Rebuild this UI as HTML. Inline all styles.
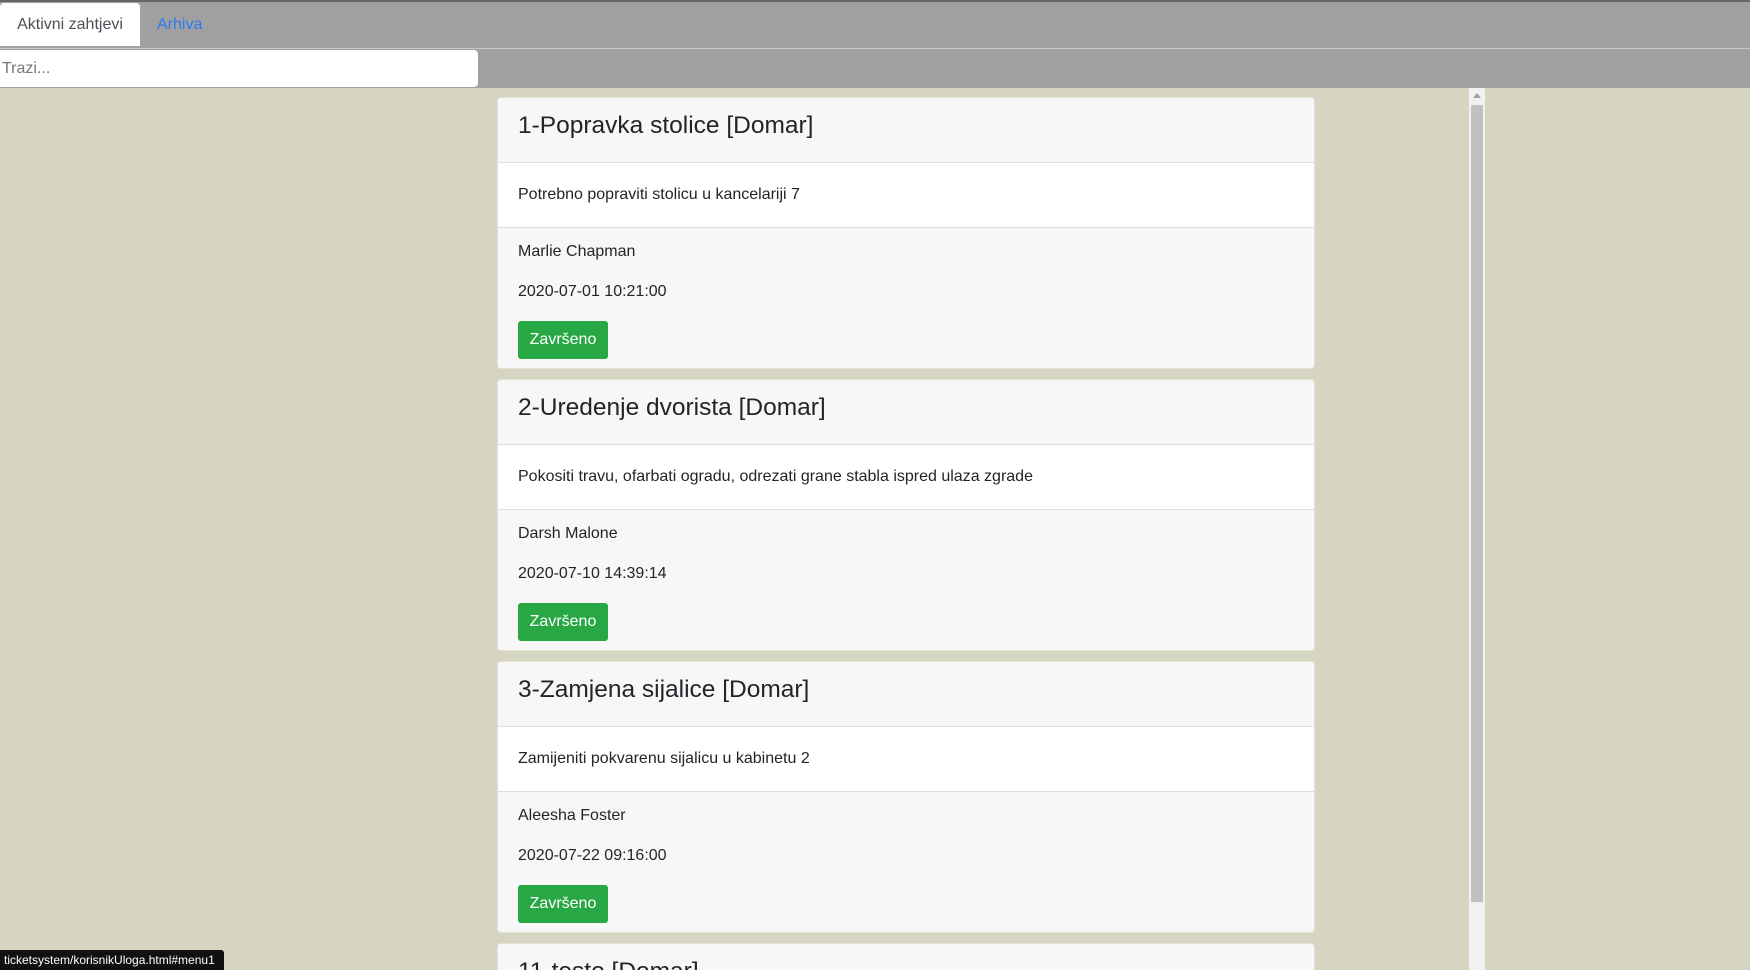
<!DOCTYPE html>
<html style="width:1750px;height:970px;overflow:hidden"><head><meta charset="utf-8"><style>
*{box-sizing:border-box;margin:0;padding:0}
body{width:1750px;height:970px;overflow:hidden;background:#d6d5c1;font-family:"Liberation Sans",sans-serif;position:relative}
.nav{position:absolute;left:0;top:0;width:1750px;height:49px;background:#a0a0a0;border-top:2px solid #666;border-bottom:1px solid #c8c8c8}
.tab{position:absolute;left:0;top:1px;width:140px;height:43px;background:#fff;border-radius:4px 4px 0 0;color:#495057;font-size:16px;line-height:43px;text-align:center}
.arh{position:absolute;left:157px;top:1px;line-height:43px;font-size:16px;color:#2a7bf0}
.sbar{position:absolute;left:0;top:49px;width:1750px;height:39px;background:#a0a0a0}
.inp{position:absolute;left:0;top:1px;width:478px;height:37px;background:#fff;border-radius:0 4px 4px 0;color:#777;font-size:16px;line-height:37px;padding-left:2px}
.card{position:absolute;left:497px;width:818px;height:272px;background:#f7f7f7;border:1px solid #e2e2dc;border-radius:4px;overflow:hidden}
.hd{height:65px;border-bottom:1px solid #ddd;font-size:24.5px;color:#212529;padding:14px 0 0 20px}
.bd{height:65px;background:#fff;border-bottom:1px solid #ddd;font-size:16px;color:#212529;padding:23px 0 0 20px}
.ft{padding:15px 0 0 20px;font-size:16px;color:#212529}
.ft p{height:40px}
.btn{display:inline-block;margin-top:-2px;background:#28a745;color:#fff;border-radius:3px;width:90px;height:38px;line-height:38px;text-align:center;font-size:16px}
.scroll{position:absolute;left:1469px;top:88px;width:16px;height:882px;background:#f1f1f1}
.thumb{position:absolute;left:2px;top:17px;width:12px;height:797px;background:#c1c1c1}
.status{position:absolute;left:0;top:950px;width:224px;height:20px;background:#111;color:#fff;font-size:12px;line-height:20px;padding-left:4px;border-radius:0 3px 0 0}
</style></head><body>
<div class="nav"><div class="tab">Aktivni zahtjevi</div><div class="arh">Arhiva</div></div>
<div class="sbar"><div class="inp">Trazi...</div></div>

<div class="card" style="top:97px"><div class="hd">1-Popravka stolice [Domar]</div><div class="bd">Potrebno popraviti stolicu u kancelariji 7</div><div class="ft"><p>Marlie Chapman</p><p>2020-07-01 10:21:00</p><span class="btn">Završeno</span></div></div>
<div class="card" style="top:379px"><div class="hd">2-Uredenje dvorista [Domar]</div><div class="bd">Pokositi travu, ofarbati ogradu, odrezati grane stabla ispred ulaza zgrade</div><div class="ft"><p>Darsh Malone</p><p>2020-07-10 14:39:14</p><span class="btn">Završeno</span></div></div>
<div class="card" style="top:661px"><div class="hd">3-Zamjena sijalice [Domar]</div><div class="bd">Zamijeniti pokvarenu sijalicu u kabinetu 2</div><div class="ft"><p>Aleesha Foster</p><p>2020-07-22 09:16:00</p><span class="btn">Završeno</span></div></div>
<div class="card" style="top:943px;height:27px;border-bottom:none;border-radius:4px 4px 0 0"><div class="hd">11-testo [Domar]</div></div>

<div class="scroll"><div style="position:absolute;left:4px;top:5px;border-left:4px solid transparent;border-right:4px solid transparent;border-bottom:5px solid #a0a0a0"></div><div class="thumb"></div></div>
<div class="status">ticketsystem/korisnikUloga.html#menu1</div>
</body></html>
